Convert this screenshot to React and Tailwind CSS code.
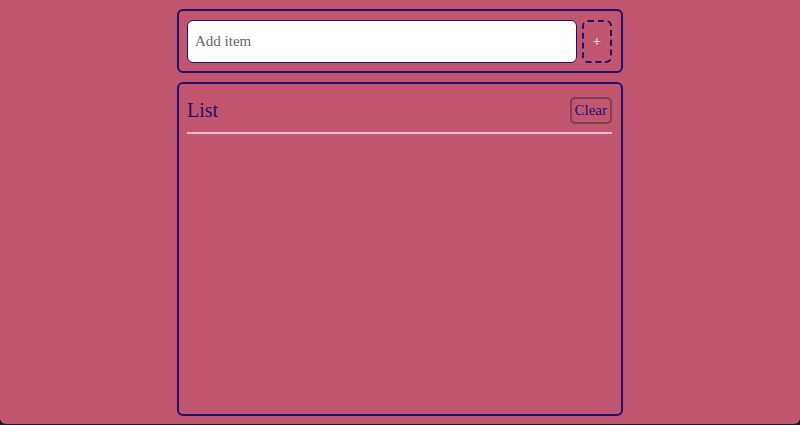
export default function App() {
  return (
    <div className="h-[425px] w-[800px] bg-[#1b1b1f]">
      <div
        className="flex h-[424px] flex-col items-center gap-[9px] rounded-b-[6px] bg-[#c2566e] pt-[9px]"
        style={{ fontFamily: '"Liberation Serif", "DejaVu Serif", serif' }}
      >
        <div className="flex h-[64px] w-[446px] items-center gap-[5px] rounded-[6px] border-2 border-[#1e1170] pl-[8px] pr-[9px]">
          <input
            type="text"
            placeholder="Add item"
            className="h-[43px] flex-1 rounded-[6px] border border-[#1e1170] bg-white px-[7px] text-[15px] text-[#333] placeholder:text-[#666] outline-none"
          />
          <button
            type="button"
            className="flex h-[43px] w-[30px] items-center justify-center rounded-[6px] border-2 border-dashed border-[#1e1170] text-[14px] text-white"
          >
            +
          </button>
        </div>

        <div className="flex h-[334px] w-[446px] flex-col rounded-[6px] border-2 border-[#1e1170] pl-[8px] pr-[9px]">
          <div className="flex items-center justify-between pt-[11px] pb-[7px]">
            <h2 className="text-[20px] text-[#1e0f6e]">List</h2>
            <button
              type="button"
              className="h-[27px] rounded-[5px] border-2 border-[#7a3f55] px-[3px] text-[15px] text-[#1e1170]"
            >
              Clear
            </button>
          </div>
          <div className="h-[2px] bg-[#e6c3cc]" />
        </div>
      </div>
    </div>
  )
}
